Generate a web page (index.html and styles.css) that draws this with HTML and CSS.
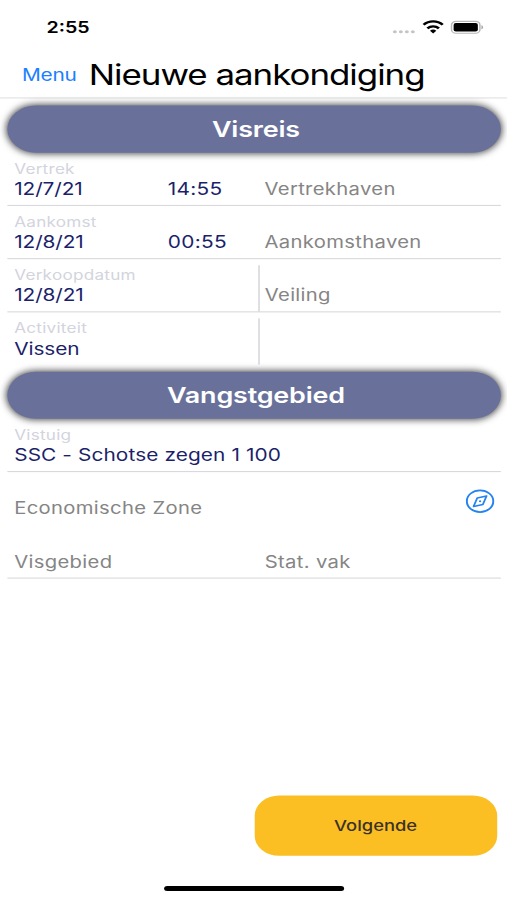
FILE: index.html
```html
<!DOCTYPE html>
<html lang="nl">
<head>
<meta charset="utf-8">
<meta name="viewport" content="width=device-width, initial-scale=1">
<title>Nieuwe aankondiging</title>
<link rel="stylesheet" href="styles.css">
</head>
<body>
<div class="screen">
  <div class="status">
    <span class="clock">2:55</span>
    <svg class="status-icons" width="76" height="16" viewBox="0 0 76 16">
      <g fill="#c4c4c4"><circle cx="3.4" cy="11.6" r="1.6"/><circle cx="8.3" cy="11.6" r="1.6"/><circle cx="13.2" cy="11.6" r="1.6"/><circle cx="18.1" cy="11.6" r="1.6"/></g>
      <g fill="none" stroke="#000" stroke-width="2.3">
        <path d="M26.9 4.7a10.8 10.8 0 0 1 15.6 0"/>
        <path d="M30 8.2a6.7 6.7 0 0 1 9.4 0"/>
      </g>
      <path d="M32.1 10.6a3.8 3.8 0 0 1 5.2 0L34.7 13.4z"/>
      <rect x="49.7" y="1.3" width="23.2" height="11.8" rx="3.6" fill="none" stroke="#b8b8b8" stroke-width="1.2"/>
      <rect x="51.4" y="3" width="19.8" height="8.4" rx="1.8"/>
      <path d="M74.1 5.2c1.9.7 1.9 3.3 0 4z" fill="#aaa"/>
    </svg>
  </div>
  <header class="nav">
    <a class="menu">Menu</a>
    <h1 class="title">Nieuwe aankondiging</h1>
  </header>
  <main class="form">
    <h2 class="section">Visreis</h2>
    <div class="row">
      <div class="cell date"><span class="label">Vertrek</span><span class="value">12/7/21</span></div>
      <div class="cell time"><span class="value hours">14:55</span></div>
      <div class="cell"><span class="hint">Vertrekhaven</span></div>
    </div>
    <div class="row">
      <div class="cell date"><span class="label">Aankomst</span><span class="value">12/8/21</span></div>
      <div class="cell time"><span class="value hours">00:55</span></div>
      <div class="cell"><span class="hint">Aankomsthaven</span></div>
    </div>
    <div class="row split">
      <div class="cell half"><span class="label">Verkoopdatum</span><span class="value">12/8/21</span></div>
      <div class="cell"><span class="hint">Veiling</span></div>
    </div>
    <div class="row split open">
      <div class="cell half"><span class="label">Activiteit</span><span class="value">Vissen</span></div>
      <div class="cell"></div>
    </div>
    <h2 class="section">Vangstgebied</h2>
    <div class="row">
      <div class="cell"><span class="label">Vistuig</span><span class="value gear">SSC - Schotse zegen 1 100</span></div>
    </div>
    <div class="row open">
      <div class="cell zone"><span class="hint">Economische Zone</span></div>
      <svg class="compass" width="24" height="28" viewBox="0 0 24 28" fill="none" stroke="#2583f0">
        <circle cx="12" cy="14" r="10.8" stroke-width="1.6"/>
        <path d="M17.3 8.8L9.7 10.8L6.7 19.2L14.3 17.2Z" stroke-width="1.5" stroke-linejoin="round"/>
        <circle cx="12" cy="14" r=".9" fill="#2583f0" stroke="none"/>
      </svg>
    </div>
    <div class="row">
      <div class="cell half"><span class="hint">Visgebied</span></div>
      <div class="cell"><span class="hint">Stat. vak</span></div>
    </div>
  </main>
  <footer class="footer">
    <button class="next">Volgende</button>
    <div class="home"></div>
  </footer>
</div>
</body>
</html>
```
FILE: styles.css
```css
* { box-sizing: border-box; }

body {
  margin: 0;
  width: 507px;
  height: 900px;
  overflow: hidden;
  background: #fff;
}

/* 414 x 896 point canvas, stretched to fill the window */
.screen {
  width: 414px;
  height: 896px;
  display: flex;
  flex-direction: column;
  transform: scale(1.22464, 1.00446);
  transform-origin: 0 0;
  font-family: Inter, "Liberation Sans", sans-serif;
  color: #000;
}

.status {
  height: 50px;
  display: flex;
  justify-content: space-between;
  padding: 17px 19px 0 38px;
}
.clock { font-size: 16px; line-height: 20px; font-weight: 600; }
.status-icons { margin-top: 3px; }

.nav {
  height: 48px;
  display: flex;
  align-items: center;
  padding: 2px 0 0 18px;
  border-bottom: 1px solid #dedede;
}
.menu { width: 54.5px; font-size: 17px; line-height: 20px; letter-spacing: -.2px; color: #1a80ff; }
.title { margin: 0; font-size: 28.5px; line-height: 36px; font-weight: 400; letter-spacing: -.84px; white-space: nowrap; }

.form { padding: 1px 5px 0 6px; }

.section {
  margin: 6px 0 0;
  height: 47px;
  padding-left: 3px;
  border-radius: 24px;
  background: #69719b;
  box-shadow: 0 0 7px 1px rgba(0, 0, 0, .7);
  color: #fff;
  font-size: 22px;
  font-weight: 600;
  letter-spacing: -.16px;
  line-height: 46px;
  text-align: center;
}

.row {
  display: flex;
  height: 53px;
  border-bottom: 1px solid #d6d6da;
}
.row.open { border-bottom-color: transparent; }

.cell {
  display: flex;
  flex-direction: column;
  justify-content: flex-end;
  padding: 0 0 5px 5.6px;
  white-space: nowrap;
}
.date { width: 125.4px; }
.time { width: 79px; }
.half { width: 204.6px; }
.split .cell + .cell { margin-top: 6px; border-left: 1px solid #ccccd2; padding-left: 4.6px; }
.zone { flex: 1; }

.label { margin-bottom: 1.5px; font-size: 14px; line-height: 18px; letter-spacing: .2px; color: #d3d4dd; }
.value { font-size: 17px; line-height: 21px; letter-spacing: -.08px; color: #1c1f6b; }
.hours { letter-spacing: .25px; }
.gear { letter-spacing: .08px; }
.hint { font-size: 16.5px; line-height: 21px; letter-spacing: .28px; color: #858585; }

.compass { margin: 15px 5px 0 0; }

.footer {
  flex: 1;
  display: flex;
  flex-direction: column;
  justify-content: flex-end;
  align-items: center;
  padding-bottom: 9px;
}
.next {
  align-self: flex-end;
  width: 198px;
  height: 60px;
  margin: 0 8.3px 30px 0;
  padding: 1px 0 0;
  border: 0;
  border-radius: 20px;
  background: #fbbf24;
  color: #3b3226;
  font: 500 15px/20px Inter, "Liberation Sans", sans-serif;
}
.home { width: 147px; height: 5.5px; border-radius: 3px; background: #000; }
```
